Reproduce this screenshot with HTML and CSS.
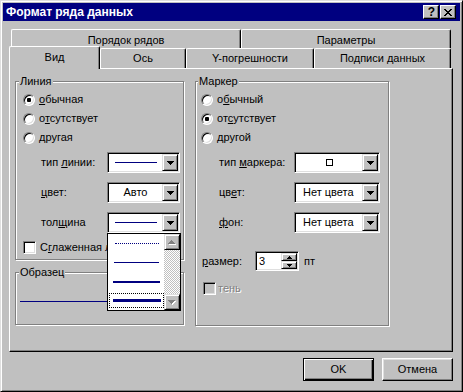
FILE: index.html
```html
<!DOCTYPE html>
<html lang="ru">
<head>
<meta charset="utf-8">
<title>Формат ряда данных</title>
<link rel="stylesheet" href="styles.css">
</head>
<body>
<div class="window">
  <div class="titlebar">
    <span class="title">Формат ряда данных</span>
    <div class="caption-buttons">
      <span class="cap-btn help">?</span>
      <span class="cap-btn close"><svg width="8" height="7" viewBox="0 0 8 7" shape-rendering="crispEdges"><path d="M0 0h2v1h-2z M6 0h2v1h-2z M1 1h2v1h-2z M5 1h2v1h-2z M2 2h4v1h-4z M3 3h2v1h-2z M2 4h4v1h-4z M1 5h2v1h-2z M5 5h2v1h-2z M0 6h2v1h-2z M6 6h2v1h-2z"/></svg></span>
    </div>
  </div>
  <div class="client">
    <div class="tab-row rear">
      <div class="tab t-order">Порядок рядов</div>
      <div class="tab t-params">Параметры</div>
    </div>
    <div class="tab-row front">
      <div class="tab t-view selected">Вид</div>
      <div class="tab t-axis">Ось</div>
      <div class="tab t-err">Y-погрешности</div>
      <div class="tab t-labels">Подписи данных</div>
    </div>
    <div class="panel">
      <div class="col-left">
        <div class="group g-line">
          <span class="group-label">Линия</span>
          <div class="radio-row"><span class="radio checked"></span><span><u>о</u>бычная</span></div>
          <div class="radio-row"><span class="radio"></span><span>о<u>т</u>сутствует</span></div>
          <div class="radio-row"><span class="radio"></span><span>другая</span></div>
          <div class="field-row">
            <span class="field-label">тип <u>л</u>инии:</span>
            <div class="combo">
              <div class="combo-value"><span class="ln ln-type"></span></div>
              <div class="combo-btn"><svg width="7" height="4" viewBox="0 0 7 4" shape-rendering="crispEdges"><path d="M0 0h7v1h-1v1h-1v1h-1v1h-1v-1h-1v-1h-1v-1h-1z"/></svg></div>
            </div>
          </div>
          <div class="field-row">
            <span class="field-label"><u>ц</u>вет:</span>
            <div class="combo">
              <div class="combo-value center">Авто</div>
              <div class="combo-btn"><svg width="7" height="4" viewBox="0 0 7 4" shape-rendering="crispEdges"><path d="M0 0h7v1h-1v1h-1v1h-1v1h-1v-1h-1v-1h-1v-1h-1z"/></svg></div>
            </div>
          </div>
          <div class="field-row">
            <span class="field-label">тол<u>щ</u>ина</span>
            <div class="combo">
              <div class="combo-value"><span class="ln ln-type"></span></div>
              <div class="combo-btn"><svg width="7" height="4" viewBox="0 0 7 4" shape-rendering="crispEdges"><path d="M0 0h7v1h-1v1h-1v1h-1v1h-1v-1h-1v-1h-1v-1h-1z"/></svg></div>
              <div class="dropdown">
                <div class="dd-items">
                  <div class="dd-item"><span class="ln ln-dot"></span></div>
                  <div class="dd-item"><span class="ln ln-1"></span></div>
                  <div class="dd-item"><span class="ln ln-2"></span></div>
                  <div class="dd-item"><span class="focus"><span class="ln ln-3"></span></span></div>
                </div>
                <div class="scrollbar">
                  <div class="sb-btn"><svg width="8" height="5" viewBox="0 0 8 5" shape-rendering="crispEdges"><path fill="#fff" d="M4 1h1v1h1v1h1v1h1v1h-7v-1h1v-1h1v-1h1z"/><path fill="#808080" d="M3 0h1v1h1v1h1v1h1v1h-7v-1h1v-1h1v-1h1z"/></svg></div>
                  <div class="sb-track"></div>
                  <div class="sb-btn"><svg width="8" height="5" viewBox="0 0 8 5" shape-rendering="crispEdges"><path fill="#fff" d="M1 1h7v1h-1v1h-1v1h-1v1h-1v-1h-1v-1h-1v-1h-1z"/><path fill="#808080" d="M0 0h7v1h-1v1h-1v1h-1v1h-1v-1h-1v-1h-1v-1h-1z"/></svg></div>
                </div>
              </div>
            </div>
          </div>
          <div class="check-row"><span class="checkbox"></span><span>С<u>г</u>лаженная линия</span></div>
        </div>
        <div class="group g-sample">
          <span class="group-label">Образец</span>
          <div class="sample-line"></div>
        </div>
      </div>
      <div class="group g-marker">
        <span class="group-label">Маркер</span>
        <div class="radio-row"><span class="radio"></span><span>о<u>б</u>ычный</span></div>
        <div class="radio-row"><span class="radio checked"></span><span>от<u>с</u>утствует</span></div>
        <div class="radio-row"><span class="radio"></span><span>другой</span></div>
        <div class="field-row">
          <span class="field-label">тип <u>м</u>аркера:</span>
          <div class="combo wide">
            <div class="combo-value center"><span class="marker-square"></span></div>
            <div class="combo-btn"><svg width="7" height="4" viewBox="0 0 7 4" shape-rendering="crispEdges"><path d="M0 0h7v1h-1v1h-1v1h-1v1h-1v-1h-1v-1h-1v-1h-1z"/></svg></div>
          </div>
        </div>
        <div class="field-row">
          <span class="field-label">цв<u>е</u>т:</span>
          <div class="combo wide">
            <div class="combo-value text">Нет цвета</div>
            <div class="combo-btn"><svg width="7" height="4" viewBox="0 0 7 4" shape-rendering="crispEdges"><path d="M0 0h7v1h-1v1h-1v1h-1v1h-1v-1h-1v-1h-1v-1h-1z"/></svg></div>
          </div>
        </div>
        <div class="field-row">
          <span class="field-label"><u>ф</u>он:</span>
          <div class="combo wide">
            <div class="combo-value text">Нет цвета</div>
            <div class="combo-btn"><svg width="7" height="4" viewBox="0 0 7 4" shape-rendering="crispEdges"><path d="M0 0h7v1h-1v1h-1v1h-1v1h-1v-1h-1v-1h-1v-1h-1z"/></svg></div>
          </div>
        </div>
        <div class="spin-row">
          <span class="spin-label"><u>р</u>азмер:</span>
          <div class="spin">
            <span class="spin-text">3</span>
            <div class="spin-btns">
              <div class="spin-btn"><svg width="5" height="3" viewBox="0 0 5 3" shape-rendering="crispEdges"><path d="M2 0h1v1h1v1h1v1h-5v-1h1v-1h1z"/></svg></div>
              <div class="spin-btn"><svg width="5" height="3" viewBox="0 0 5 3" shape-rendering="crispEdges"><path d="M0 0h5v1h-1v1h-1v1h-1v-1h-1v-1h-1z"/></svg></div>
            </div>
          </div>
          <span class="unit">пт</span>
        </div>
        <div class="check-row"><span class="checkbox disabled"></span><span class="disabled-text">тень</span></div>
      </div>
    </div>
    <div class="dialog-buttons">
      <div class="btn default">OK</div>
      <div class="btn">Отмена</div>
    </div>
  </div>
</div>
</body>
</html>
```
FILE: styles.css
```css
* { box-sizing: border-box; }
html, body { margin: 0; padding: 0; background: #c0c0c0; }
body {
  font-family: "Liberation Sans", Arial, sans-serif;
  font-size: 11px;
  line-height: 13px;
  color: #000;
}
u { text-decoration: underline; text-underline-offset: 1px; }

.window {
  width: 463px;
  height: 392px;
  border: 1px solid;
  border-color: #dfdfdf #000 #000 #dfdfdf;
  box-shadow: inset 1px 1px 0 #fff, inset -1px -1px 0 #808080;
  padding: 2px;
  background: #c0c0c0;
}

/* title bar */
.titlebar {
  height: 18px;
  background: #000080;
  display: flex;
  align-items: center;
  padding: 0 4px 0 3px;
}
.title {
  flex: 1;
  color: #fff;
  font-weight: bold;
  font-size: 12px;
  line-height: 18px;
  white-space: nowrap;
}
.caption-buttons { display: flex; gap: 1px; }
.cap-btn {
  width: 16px;
  height: 14px;
  background: #c0c0c0;
  border: 1px solid;
  border-color: #fff #000 #000 #fff;
  box-shadow: inset -1px -1px 0 #808080;
  display: flex;
  align-items: center;
  justify-content: center;
}
.cap-btn.help { font-weight: bold; font-size: 12px; line-height: 12px; padding-left: 1px; }

/* client */
.client { padding-left: 6px; }

.tab-row { display: flex; }
.tab-row.rear { margin: 8px 0 0 2px; height: 19px; }
.tab-row.front { height: 20px; }
.tab {
  height: 100%;
  background: #c0c0c0;
  border-top: 1px solid #fff;
  border-left: 1px solid #fff;
  border-right: 1px solid #000;
  box-shadow: inset -1px 0 0 #808080;
  border-radius: 2px 2px 0 0;
  text-align: center;
  white-space: nowrap;
}
.rear .tab { padding-top: 4px; }
.front .tab { padding-top: 3px; }
.tab.selected {
  height: 23px;
  margin-top: -2px;
  padding-top: 4px;
  position: relative;
  z-index: 1;
}
.t-order { width: 230px; }
.t-params { width: 210px; }
.t-view { width: 91px; }
.t-axis { width: 86px; }
.t-err { width: 128px; }
.t-labels { width: 137px; }

.panel {
  width: 444px;
  height: 284px;
  border: 1px solid;
  border-color: #fff #000 #000 #fff;
  box-shadow: inset -1px -1px 0 #808080;
  padding: 12px 0 0 5px;
  display: flex;
  align-items: flex-start;
  gap: 11px;
}

.col-left { width: 169px; display: flex; flex-direction: column; gap: 12px; }

.group {
  position: relative;
  border: 1px solid #808080;
  box-shadow: inset 1px 1px 0 #fff, 1px 1px 0 #fff;
}
.group-label {
  position: absolute;
  top: -7px;
  left: 3px;
  padding: 0 1px;
  background: #c0c0c0;
  white-space: nowrap;
}
.g-marker .group-label { left: 2px; }

.g-line { height: 179px; padding-top: 8px; display: flex; flex-direction: column; }
.g-sample { height: 53px; }
.g-marker { width: 194px; height: 245px; padding-top: 8px; display: flex; flex-direction: column; }

.radio-row { display: flex; align-items: center; height: 19px; white-space: nowrap; }
.g-line .radio-row { padding-left: 7px; }
.g-marker .radio-row { padding-left: 5px; }

.radio {
  width: 12px;
  height: 12px;
  margin-right: 4px;
  border-radius: 50%;
  background: #fff;
  border: 1px solid;
  border-color: #808080 #fff #fff #808080;
  box-shadow: inset 1px 1px 0 #000, inset -1px -1px 0 #dfdfdf;
  position: relative;
  flex: none;
}
.radio.checked::after {
  content: "";
  position: absolute;
  left: 3px;
  top: 3px;
  width: 4px;
  height: 4px;
  border-radius: 1px;
  background: #000;
}

.field-row { display: flex; align-items: center; height: 21px; white-space: nowrap; }
.radio-row + .field-row { margin-top: 5px; }
.field-row + .field-row { margin-top: 9px; }
.g-line .field-row { padding-left: 25px; }
.g-line .field-label { width: 66px; }
.g-marker .field-row { padding-left: 23px; }
.g-marker .field-label { width: 75px; }

.combo {
  position: relative;
  display: flex;
  width: 73px;
  height: 21px;
  padding: 1px;
  background: #fff;
  border: 1px solid;
  border-color: #808080 #fff #fff #808080;
  box-shadow: inset 1px 1px 0 #000, inset -1px -1px 0 #dfdfdf;
  flex: none;
}
.combo.wide { width: 86px; }
.combo-value { flex: 1; display: flex; align-items: center; }
.combo-value.center { justify-content: center; }
.combo-value.text { padding-left: 7px; }
.combo-btn {
  width: 16px;
  height: 17px;
  background: #c0c0c0;
  border: 1px solid;
  border-color: #dfdfdf #000 #000 #dfdfdf;
  box-shadow: inset 1px 1px 0 #fff, inset -1px -1px 0 #808080;
  display: flex;
  align-items: center;
  justify-content: center;
}
.marker-square { width: 7px; height: 7px; border: 1px solid #000; }

.ln { display: block; background: #000080; }
.ln-type { margin-left: 6px; width: 42px; height: 1px; }
.ln-dot { margin-left: 7px; width: 44px; height: 1px; background: none; border-top: 1px dotted #000080; }
.ln-1 { margin-left: 6px; width: 45px; height: 1px; }
.ln-2 { margin-left: 5px; width: 47px; height: 2px; }
.ln-3 { margin-left: 3px; width: 48px; height: 3px; }

/* dropdown list */
.dropdown {
  position: absolute;
  z-index: 5;
  top: calc(100% + 1px);
  left: -1px;
  width: 74px;
  height: 78px;
  border: 1px solid #000;
  background: #fff;
  display: flex;
}
.dd-items { flex: 1; display: flex; flex-direction: column; }
.dd-item { height: 19px; display: flex; align-items: center; }
.focus {
  display: flex;
  align-items: center;
  margin-left: 1px;
  width: 55px;
  height: 15px;
  border: 1px dotted #000;
}
.scrollbar { width: 16px; display: flex; flex-direction: column; }
.sb-btn {
  height: 16px;
  background: #c0c0c0;
  border: 1px solid;
  border-color: #dfdfdf #000 #000 #dfdfdf;
  box-shadow: inset 1px 1px 0 #fff, inset -1px -1px 0 #808080;
  display: flex;
  align-items: center;
  justify-content: center;
}
.sb-track {
  flex: 1;
  background-image: conic-gradient(#fff 25%, #c0c0c0 0 50%, #fff 0 75%, #c0c0c0 0);
  background-size: 2px 2px;
}

.check-row { display: flex; align-items: center; height: 13px; white-space: nowrap; padding-left: 7px; }
.field-row + .check-row { margin-top: 8px; }
.spin-row + .check-row { margin-top: 11px; }
.checkbox {
  width: 13px;
  height: 13px;
  margin-right: 4px;
  background: #fff;
  border: 1px solid;
  border-color: #808080 #fff #fff #808080;
  box-shadow: inset 1px 1px 0 #000, inset -1px -1px 0 #dfdfdf;
  flex: none;
}
.checkbox.disabled { background: #c0c0c0; margin-right: 2px; }
.disabled-text { color: #808080; text-shadow: 1px 1px 0 #fff; }

.spin-row { display: flex; align-items: center; height: 20px; padding-left: 6px; margin-top: 18px; }
.spin-label { width: 53px; }
.spin {
  display: flex;
  width: 44px;
  height: 20px;
  padding: 1px;
  background: #fff;
  border: 1px solid;
  border-color: #808080 #fff #fff #808080;
  box-shadow: inset 1px 1px 0 #000, inset -1px -1px 0 #dfdfdf;
}
.spin-text { flex: 1; padding-left: 2px; line-height: 16px; }
.spin-btns { width: 16px; display: flex; flex-direction: column; }
.spin-btn {
  height: 8px;
  background: #c0c0c0;
  border: 1px solid;
  border-color: #dfdfdf #000 #000 #dfdfdf;
  box-shadow: inset 1px 1px 0 #fff, inset -1px -1px 0 #808080;
  display: flex;
  align-items: center;
  justify-content: center;
}
.unit { margin-left: 5px; }

.sample-line { margin: 28px 0 0 4px; width: 160px; height: 1px; background: #000080; }

/* dialog buttons */
.dialog-buttons {
  width: 444px;
  margin-top: 6px;
  display: flex;
  justify-content: flex-end;
  gap: 8px;
}
.btn {
  width: 71px;
  height: 23px;
  border: 1px solid;
  border-color: #fff #000 #000 #fff;
  box-shadow: inset -1px -1px 0 #808080, inset 1px 1px 0 #dfdfdf;
  display: flex;
  align-items: center;
  justify-content: center;
}
.btn.default {
  border-color: #000;
  box-shadow: inset 1px 1px 0 #fff, inset -1px -1px 0 #000, inset -2px -2px 0 #808080;
}
```
